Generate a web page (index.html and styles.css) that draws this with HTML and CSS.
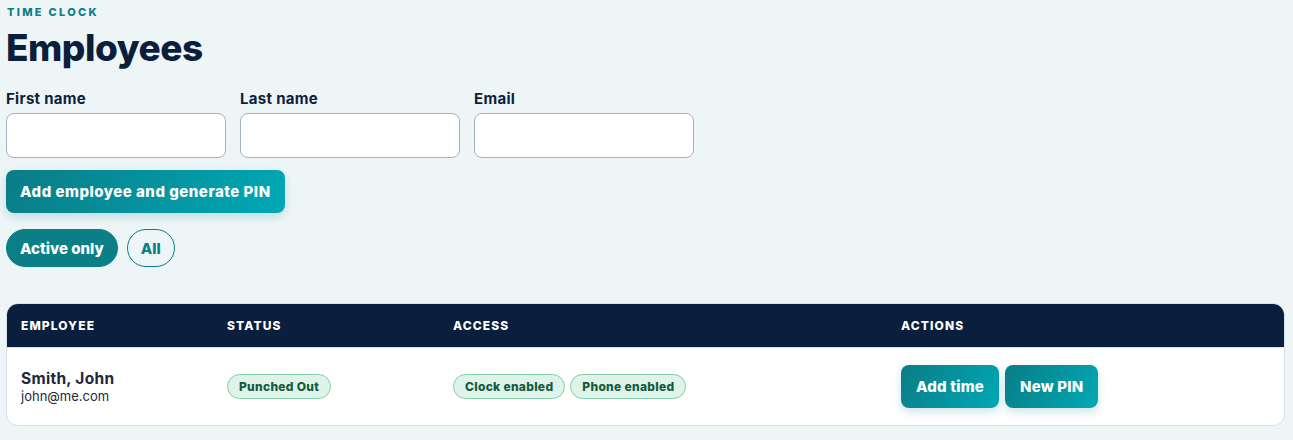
FILE: index.html
```html
<!DOCTYPE html>
<html>
<head>
  <title>Employees</title>
  <link rel="stylesheet" href="styles.css">
</head>
<body>
  <div class="page">
    <div class="eyebrow">TIME CLOCK</div>
    <h1 class="title">Employees</h1>

    <form class="add-form">
      <div class="fields">
        <label class="field">
          <span>First name</span>
          <input type="text">
        </label>
        <label class="field">
          <span>Last name</span>
          <input type="text">
        </label>
        <label class="field">
          <span>Email</span>
          <input type="text">
        </label>
      </div>
      <button type="button" class="btn-primary">Add employee and generate PIN</button>
    </form>

    <div class="filters">
      <button class="pill pill-active">Active only</button>
      <button class="pill">All</button>
    </div>

    <div class="table-wrap">
      <table class="employees">
        <thead>
          <tr>
            <th class="col-employee">Employee</th>
            <th class="col-status">Status</th>
            <th class="col-access">Access</th>
            <th>Actions</th>
          </tr>
        </thead>
        <tbody>
          <tr>
            <td>
              <div class="emp-name">Smith, John</div>
              <div class="emp-email">john@me.com</div>
            </td>
            <td><span class="badge">Punched Out</span></td>
            <td>
              <div class="badges">
                <span class="badge">Clock enabled</span>
                <span class="badge">Phone enabled</span>
              </div>
            </td>
            <td>
              <div class="actions">
                <button class="btn-primary">Add time</button>
                <button class="btn-primary">New PIN</button>
              </div>
            </td>
          </tr>
        </tbody>
      </table>
    </div>
  </div>
</body>
</html>
```

FILE: styles.css
```css
body {
  margin: 0;
  background: #edf5f7;
  font-family: Inter, "Noto Sans", sans-serif;
  color: #0b1f3d;
}

.page {
  padding: 5px 8px 0 6px;
}

.eyebrow {
  font-size: 11px;
  line-height: 15px;
  font-weight: 800;
  letter-spacing: 2.3px;
  color: #0b7f86;
  padding-left: 1px;
}

.title {
  margin: 4px 0 0;
  font-size: 37px;
  line-height: 48px;
  font-weight: 800;
  letter-spacing: -0.5px;
  color: #0b1f3d;
}

.add-form {
  margin-top: 17px;
}

.fields {
  display: flex;
  gap: 14px;
}

.field {
  display: flex;
  flex-direction: column;
  width: 220px;
}

.field span {
  font-size: 15px;
  line-height: 19px;
  font-weight: 700;
  letter-spacing: 0.3px;
  color: #0b1f3d;
  margin-bottom: 5px;
}

.field input {
  box-sizing: border-box;
  height: 45px;
  border: 1px solid #a3b3c2;
  border-radius: 8px;
  background: #fff;
  outline: none;
}

.btn-primary {
  height: 43px;
  padding: 0 14px;
  border: none;
  border-radius: 8px;
  font-family: inherit;
  font-size: 15px;
  font-weight: 800;
  letter-spacing: 0.5px;
  color: #fff;
  background: linear-gradient(120deg, #0a7c86, #00a9b5);
  box-shadow: 0 4px 10px rgba(10, 124, 134, 0.2);
  cursor: pointer;
}

.add-form .btn-primary {
  margin-top: 12px;
}

.filters {
  display: flex;
  gap: 9px;
  margin-top: 16px;
}

.pill {
  box-sizing: border-box;
  height: 38px;
  padding: 0 13px;
  border: 1px solid #0b7f86;
  border-radius: 19px;
  background: transparent;
  font-family: inherit;
  font-size: 15px;
  font-weight: 800;
  color: #0b7f86;
  cursor: pointer;
}

.pill-active {
  background: #0b7f86;
  color: #fff;
}

.table-wrap {
  margin-top: 36px;
  border: 1px solid #d5e3ea;
  border-radius: 12px;
  overflow: hidden;
  background: #fff;
}

.employees {
  width: 100%;
  border-collapse: collapse;
}

.employees th {
  height: 43px;
  padding: 0 14px;
  background: #0a1f3d;
  color: #fff;
  font-size: 12px;
  font-weight: 800;
  letter-spacing: 1.1px;
  text-transform: uppercase;
  text-align: left;
}

.col-employee {
  width: 178px;
}

.col-status {
  width: 198px;
}

.col-access {
  width: 420px;
}

.employees td {
  height: 77px;
  padding: 0 14px;
  border-top: 1px solid #d5e3ea;
  vertical-align: middle;
}

.emp-name {
  font-size: 15.5px;
  line-height: 19px;
  font-weight: 700;
  letter-spacing: 0.3px;
  color: #1e293b;
}

.emp-email {
  font-size: 13px;
  line-height: 17px;
  color: #1e293b;
}

.badges {
  display: flex;
  gap: 5px;
}

.badge {
  display: inline-block;
  padding: 4px 11px;
  border: 1px solid #7fcfa9;
  border-radius: 13px;
  background: #dff3ea;
  color: #0f5b3c;
  font-size: 12px;
  line-height: 15px;
  font-weight: 800;
  letter-spacing: 0.3px;
}

.actions {
  display: flex;
  gap: 6px;
}

.actions .btn-primary {
  padding: 0 15px;
  letter-spacing: 0.2px;
}
```
